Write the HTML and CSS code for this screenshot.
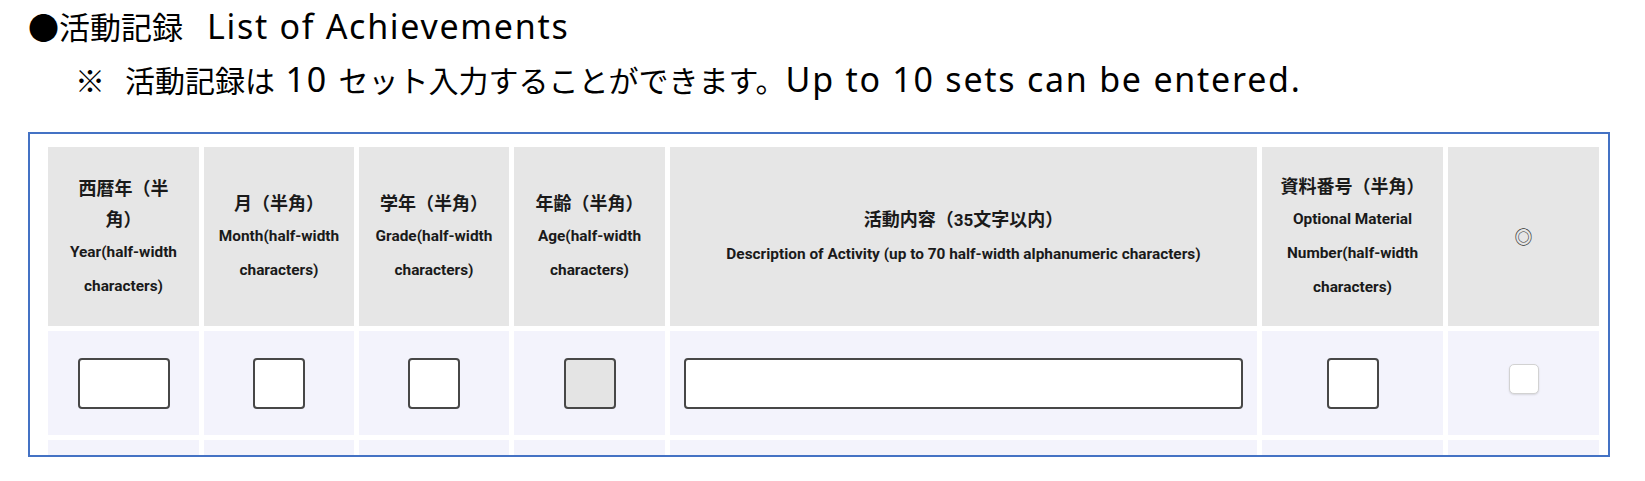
FILE: index.html
```html
<!DOCTYPE html>
<html lang="ja">
<head>
<meta charset="utf-8">
<title>活動記録 List of Achievements</title>
<link rel="stylesheet" href="styles.css">
</head>
<body>
<div class="page">
  <h2 class="title">●活動記録<span class="lat lat-title">List of Achievements</span></h2>
  <p class="note"><span class="mark">※</span>活動記録は<span class="lat lat-note"> 10 </span>セット入力することができます。<span class="lat lat-note">Up to 10 sets can be entered.</span></p>
  <div class="box">
    <table class="grid">
      <colgroup>
        <col class="c-year"><col class="c-month"><col class="c-grade"><col class="c-age"><col class="c-desc"><col class="c-num"><col class="c-check">
      </colgroup>
      <thead>
        <tr class="head-row">
          <th>西暦年（半<br>角）<br><span class="en">Year(half-width<br>characters)</span></th>
          <th>月（半角）<br><span class="en">Month(half-width<br>characters)</span></th>
          <th>学年（半角）<br><span class="en">Grade(half-width<br>characters)</span></th>
          <th>年齢（半角）<br><span class="en">Age(half-width<br>characters)</span></th>
          <th>活動内容（<span class="en-num">35</span>文字以内）<br><span class="en">Description of Activity (up to 70 half-width alphanumeric characters)</span></th>
          <th>資料番号（半角）<br><span class="en">Optional Material<br>Number(half-width<br>characters)</span></th>
          <th><span class="mark-col">◎</span></th>
        </tr>
      </thead>
      <tbody>
        <tr class="data-row">
          <td><input class="in in-year" type="text"></td>
          <td><input class="in in-small" type="text"></td>
          <td><input class="in in-small" type="text"></td>
          <td><input class="in in-small in-disabled" type="text" readonly></td>
          <td><input class="in in-desc" type="text"></td>
          <td><input class="in in-small" type="text"></td>
          <td><input class="chk" type="checkbox"></td>
        </tr>
        <tr class="data-row">
          <td><input class="in in-year" type="text"></td>
          <td><input class="in in-small" type="text"></td>
          <td><input class="in in-small" type="text"></td>
          <td><input class="in in-small in-disabled" type="text" readonly></td>
          <td><input class="in in-desc" type="text"></td>
          <td><input class="in in-small" type="text"></td>
          <td><input class="chk" type="checkbox"></td>
        </tr>
      </tbody>
    </table>
  </div>
</div>
</body>
</html>
```
FILE: styles.css
```css
html, body {
  margin: 0;
  padding: 0;
  background: #ffffff;
}

body {
  font-family: "Noto Sans CJK JP", "Noto Sans", sans-serif;
  color: #000;
}

.page {
  padding: 0 0 0 28px;
}

.title {
  margin: 6px 0 0;
  font-size: 31px;
  line-height: 40px;
  font-weight: normal;
}

.note {
  margin: 13px 0 0;
  padding-left: 47px;
  font-size: 30px;
  line-height: 40px;
}

.mark {
  margin-right: 20px;
}

.lat {
  font-family: "Noto Sans", sans-serif;
  font-size: 34px;
  line-height: 1;
}

.lat-title {
  margin-left: 24px;
  letter-spacing: 1.7px;
}

.lat-note {
  letter-spacing: 1.75px;
}

.box {
  box-sizing: border-box;
  width: 1582px;
  height: 325px;
  margin-top: 33px;
  border: 2px solid #4472c4;
  padding: 8px 4px 0 13px;
  overflow: hidden;
}

.grid {
  table-layout: fixed;
  width: 1561px;
  border-collapse: separate;
  border-spacing: 5px;
}

.c-year { width: 151px; }
.c-month { width: 150px; }
.c-grade { width: 150px; }
.c-age { width: 151px; }
.c-desc { width: 587px; }
.c-num { width: 181px; }
.c-check { width: 151px; }

.head-row {
  height: 179px;
}

.head-row th {
  background: #e6e6e6;
  padding: 0;
  font-family: "Noto Sans CJK JP", sans-serif;
  font-size: 18px;
  font-weight: bold;
  line-height: 31px;
  color: #1a1a1a;
  text-align: center;
  vertical-align: middle;
  white-space: nowrap;
}

.en, .en-num {
  font-family: Roboto, "Noto Sans", sans-serif;
  font-size: 15.4px;
  font-weight: bold;
}

.en-num {
  font-size: 17px;
}

.mark-col {
  font-size: 18px;
  font-weight: normal;
  color: #3a3a3a;
}

.data-row {
  height: 104px;
}

.data-row td {
  background: #f3f3fc;
  padding: 0;
  vertical-align: middle;
}

.in {
  display: block;
  box-sizing: border-box;
  margin: 1px auto 0;
  height: 51px;
  padding: 0;
  border: 2px solid #474747;
  border-radius: 4px;
  background: #fff;
  outline: none;
}

.in-year { width: 92px; }
.in-small { width: 52px; }
.in-desc { width: 559px; }

.in-disabled {
  background: #e4e4e4;
}

.chk {
  -webkit-appearance: none;
  appearance: none;
  display: block;
  box-sizing: border-box;
  width: 30px;
  height: 30px;
  margin: 0 auto 9px;
  border: 1px solid #d2d2d2;
  border-radius: 5px;
  background: #fff;
  box-shadow: 0 1px 2px rgba(0, 0, 0, 0.12);
}
```
